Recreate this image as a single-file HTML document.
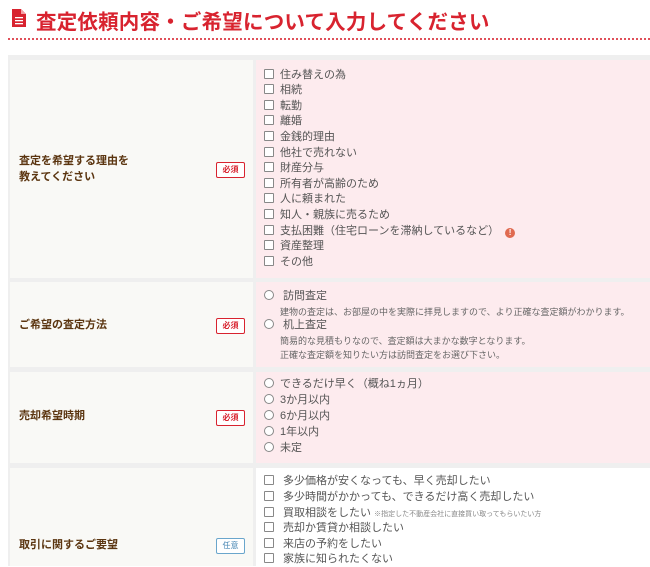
<!DOCTYPE html>
<html><head><meta charset="utf-8"><style>
body{margin:0;width:650px;height:566px;overflow:hidden;background:#fff;font-family:"Liberation Sans","Noto Sans CJK JP",sans-serif;position:relative}
.a{position:absolute}
.t{position:absolute;left:36px;top:5px;font-size:20.5px;font-weight:bold;color:#d8232f;white-space:nowrap;letter-spacing:0.2px}
.ul{position:absolute;left:8px;top:38px;width:642px;height:0;border-top:2px dotted #e0505a}
.frame{position:absolute;left:8px;top:55px;width:642px;height:511px;background:#efefef}
.L{position:absolute;left:10px;width:243px;background:#f9f9f6}
.R{position:absolute;left:256px;width:394px;background:#fdebee}
.lab{position:absolute;left:19px;font-size:11px;font-weight:bold;color:#5b3510;line-height:16px}
.bd{position:absolute;left:216px;width:27px;height:14px;border:1px solid #d8232f;border-radius:2px;background:#fff;color:#d8232f;font-size:8px;text-align:center;line-height:14px;font-weight:bold}
.bd.b{border-color:#6aa6cc;color:#4a88b5;font-weight:normal}
.it{position:absolute;left:264px;font-size:11px;color:#555;line-height:15px;white-space:nowrap}
.cb{display:inline-block;width:8px;height:8px;border:1px solid #888;border-radius:1px;background:#fff;vertical-align:-1px;margin-right:6px}
.rb{display:inline-block;width:8px;height:8px;border:1px solid #888;border-radius:50%;background:#fff;vertical-align:-1px;margin-right:6px}
.sm{position:absolute;left:280px;font-size:9px;color:#666;white-space:nowrap}
</style></head><body>
<svg class="a" style="left:12px;top:9px" width="14" height="18" viewBox="0 0 14 18"><path d="M0 0h9l5 5v13H0z" fill="#d8232f"/><path d="M9 0v5h5" fill="#f4a0a5"/><rect x="3" y="8" width="8" height="1.3" fill="#fff"/><rect x="3" y="11" width="8" height="1.3" fill="#fff"/><rect x="3" y="14" width="8" height="1.3" fill="#fff"/></svg>
<div class="t">査定依頼内容・ご希望について入力してください</div>
<div class="ul"></div>
<div class="frame"></div>
<div class="L" style="top:60px;height:218px"></div><div class="R" style="top:60px;height:218px"></div>
<div class="L" style="top:282px;height:85px"></div><div class="R" style="top:282px;height:85px"></div>
<div class="L" style="top:372px;height:91px"></div><div class="R" style="top:372px;height:91px"></div>
<div class="L" style="top:468px;height:98px"></div><div class="R" style="top:468px;height:98px;background:#fff"></div>

<div class="lab" style="top:153px">査定を希望する理由を<br>教えてください</div>
<div class="bd" style="top:162px">必須</div>
<div class="it" style="top:67.5px"><span class="cb"></span>住み替えの為</div>
<div class="it" style="top:83.1px"><span class="cb"></span>相続</div>
<div class="it" style="top:98.7px"><span class="cb"></span>転勤</div>
<div class="it" style="top:114.3px"><span class="cb"></span>離婚</div>
<div class="it" style="top:129.9px"><span class="cb"></span>金銭的理由</div>
<div class="it" style="top:145.5px"><span class="cb"></span>他社で売れない</div>
<div class="it" style="top:161.1px"><span class="cb"></span>財産分与</div>
<div class="it" style="top:176.7px"><span class="cb"></span>所有者が高齢のため</div>
<div class="it" style="top:192.3px"><span class="cb"></span>人に頼まれた</div>
<div class="it" style="top:207.9px"><span class="cb"></span>知人・親族に売るため</div>
<div class="it" style="top:223.5px"><span class="cb"></span>支払困難（住宅ローンを滞納しているなど）<span style="display:inline-block;width:10px;height:10px;border-radius:50%;background:#e06a50;color:#fff;font-size:8px;line-height:10px;text-align:center;font-weight:bold;margin-left:6px;vertical-align:-1px">!</span></div>
<div class="it" style="top:239.1px"><span class="cb"></span>資産整理</div>
<div class="it" style="top:254.7px"><span class="cb"></span>その他</div>

<div class="lab" style="top:317px">ご希望の査定方法</div>
<div class="bd" style="top:318px">必須</div>
<div class="it" style="top:289px"><span class="rb"></span> 訪問査定</div>
<div class="sm" style="top:305px">建物の査定は、お部屋の中を実際に拝見しますので、より正確な査定額がわかります。</div>
<div class="it" style="top:318px"><span class="rb"></span> 机上査定</div>
<div class="sm" style="top:334px">簡易的な見積もりなので、査定額は大まかな数字となります。</div>
<div class="sm" style="top:348px">正確な査定額を知りたい方は訪問査定をお選び下さい。</div>

<div class="lab" style="top:408px">売却希望時期</div>
<div class="bd" style="top:410px">必須</div>
<div class="it" style="top:377px"><span class="rb"></span>できるだけ早く（概ね1ヵ月）</div>
<div class="it" style="top:393px"><span class="rb"></span>3か月以内</div>
<div class="it" style="top:409px"><span class="rb"></span>6か月以内</div>
<div class="it" style="top:425px"><span class="rb"></span>1年以内</div>
<div class="it" style="top:441px"><span class="rb"></span>未定</div>

<div class="lab" style="top:537px">取引に関するご要望</div>
<div class="bd b" style="top:538px">任意</div>
<div class="it" style="top:474px"><span class="cb"></span> 多少価格が安くなっても、早く売却したい</div>
<div class="it" style="top:490px"><span class="cb"></span> 多少時間がかかっても、できるだけ高く売却したい</div>
<div class="it" style="top:506px"><span class="cb"></span> 買取相談をしたい <span style="font-size:7px;color:#888">※指定した不動産会社に直接買い取ってもらいたい方</span></div>
<div class="it" style="top:521px"><span class="cb"></span> 売却か賃貸か相談したい</div>
<div class="it" style="top:537px"><span class="cb"></span> 来店の予約をしたい</div>
<div class="it" style="top:552px"><span class="cb"></span> 家族に知られたくない</div>
</body></html>
